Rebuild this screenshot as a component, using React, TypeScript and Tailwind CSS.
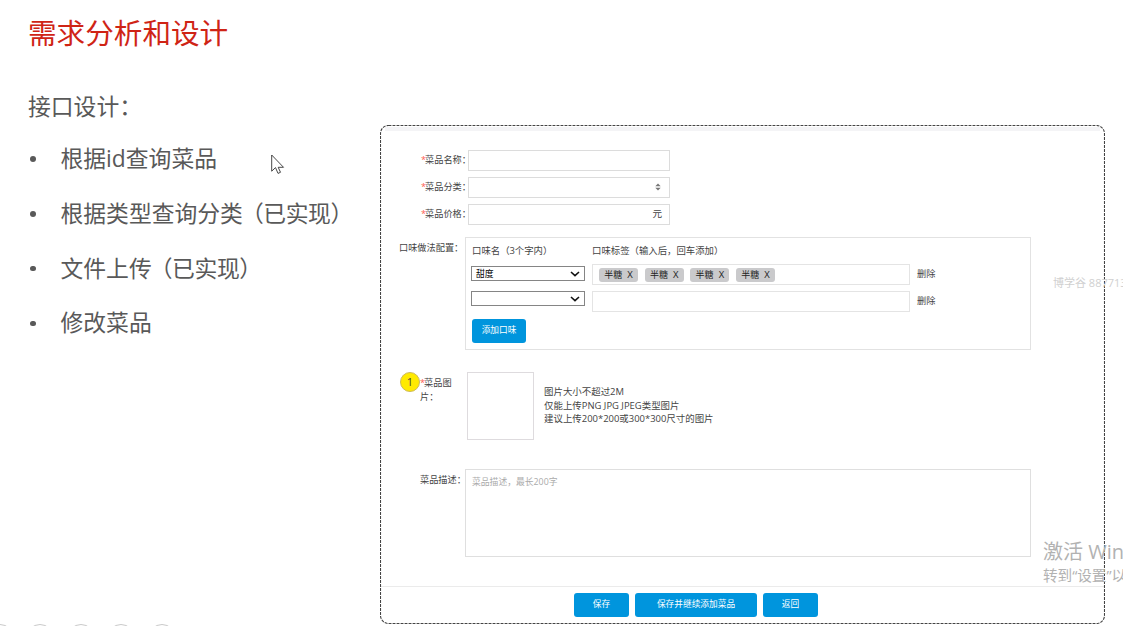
import clsx from 'clsx';

const apis = [
  { name: '根据id查询菜品', done: false },
  { name: '根据类型查询分类', done: true },
  { name: '文件上传', done: true },
  { name: '修改菜品', done: false },
];

const flavors = [
  { id: 1, name: '甜度', tags: ['半糖', '半糖', '半糖', '半糖'] },
  { id: 2, name: '', tags: [] },
];

function Field({ label, children }: { label: string; children?: React.ReactNode }) {
  return (
    <div className="flex h-5 items-center">
      <div className="w-[47px] shrink-0 whitespace-nowrap">
        <span className="-mr-px text-[#ff5a4f]">*</span>
        {label}
      </div>
      <div className="flex h-[21px] w-[202px] shrink-0 items-center justify-end border border-[#dcdcdc] pr-[7px]">
        {children}
      </div>
    </div>
  );
}

function Select({ value }: { value: string }) {
  return (
    <div className="flex h-[15px] w-[114px] items-center justify-between overflow-hidden border border-[#858585] pr-1 pl-1 text-[8.8px] text-black">
      <span className="pt-[3px]">{value}</span>
      <svg width="10" height="6" viewBox="0 0 10 6" fill="none">
        <path d="M1 1L5 4.6L9 1" stroke="#111" strokeWidth="1.6" />
      </svg>
    </div>
  );
}

function Button({ children, className }: { children: string; className: string }) {
  return (
    <button
      className={clsx(
        'flex h-6 items-center justify-center rounded-[3px] bg-[#0095dd] text-[8.7px] whitespace-nowrap text-white',
        className
      )}
    >
      {children}
    </button>
  );
}

function DishForm() {
  return (
    <div className="relative mt-[125px] flex h-[499px] w-[725px] shrink-0 flex-col px-px text-[9.2px] leading-[13.5px] text-[#444]">
      <svg className="absolute inset-0" width="725" height="499" fill="none">
        <rect x="0.5" y="0.5" width="724" height="498" rx="8" stroke="#444" strokeWidth="1.1" strokeDasharray="2.9 1.1" />
      </svg>
      <div className="mx-1 mt-0.5 h-1 shrink-0 bg-[#f4f4f6]" />

      <div className="mt-[19px] ml-10 flex flex-col gap-[7px]">
        <Field label="菜品名称：" />
        <Field label="菜品分类：">
          <svg className="mr-px" width="6" height="8" viewBox="0 0 6 8" fill="#777">
            <path d="M0.3 3.2L3 0.4L5.7 3.2ZM0.3 4.8L3 7.6L5.7 4.8Z" />
          </svg>
        </Field>
        <Field label="菜品价格：">
          <span className="text-[9.6px]">元</span>
        </Field>
      </div>

      <div className="mt-[13px] ml-[18px] flex">
        <div className="mt-[3.5px] w-[66px] shrink-0 whitespace-nowrap">口味做法配置：</div>
        <div className="h-[113px] w-[566px] shrink-0 border border-[#e2e2e2] px-[5px] pt-1.5">
          <div className="flex pl-px text-[9.4px]">
            <div className="w-[120px] whitespace-nowrap">口味名（3个字内）</div>
            <div className="whitespace-nowrap">口味标签（输入后，回车添加）</div>
          </div>
          <div className="mt-[6.5px] flex flex-col gap-1.5">
            {flavors.map((f, row) => (
              <div key={f.id} className="flex h-[21px] items-start">
                <div className={row === 0 ? 'pt-0.5' : ''}>
                  <Select value={f.name} />
                </div>
                <div className="ml-[7px] flex h-[21px] w-[318px] items-center gap-[6.7px] border border-[#e4e4e4] pl-1.5">
                  {f.tags.map((tag, i) => (
                    <span
                      key={i}
                      className="flex h-3.5 w-[39px] items-center justify-center gap-[5px] rounded-[3px] bg-[#cacacc] text-[9px] text-[#222]"
                    >
                      {tag}
                      <span className="text-[9.5px]">X</span>
                    </span>
                  ))}
                </div>
                <span className="mt-[3px] ml-[7px]">删除</span>
              </div>
            ))}
          </div>
          <Button className="mt-[7px] ml-px w-[54px]">添加口味</Button>
        </div>
      </div>

      <div className="mt-[22px] ml-[19px] flex">
        <div className="flex h-5 w-5 shrink-0 items-center justify-center rounded-full border border-[#cdb95c] bg-[#ffea00] text-[11px] text-[#444]">
          1
        </div>
        <div className="mt-[4px] w-[47px] shrink-0 whitespace-nowrap">
          <span className="-mr-px text-[#ff5a4f]">*</span>菜品图
          <br />
          片：
        </div>
        <div className="h-[68px] w-[67px] shrink-0 border border-[#dedbde]" />
        <div className="mt-[13px] ml-2.5 text-[9.45px] whitespace-nowrap">
          <p>图片大小不超过2M</p>
          <p>仅能上传PNG JPG JPEG类型图片</p>
          <p>建议上传200*200或300*300尺寸的图片</p>
        </div>
      </div>

      <div className="mt-[29px] ml-[39px] flex">
        <div className="mt-1 w-[45px] shrink-0 whitespace-nowrap">菜品描述：</div>
        <div className="h-[88px] w-[566px] shrink-0 border border-[#dfdfdf] px-1.5 pt-1.5 text-[8.8px] text-[#aaa]">
          菜品描述，最长200字
        </div>
      </div>

      <div className="mt-[29px] flex gap-1.5 border-t border-[#ebebeb] pt-1.5 pl-[193px]">
        <Button className="w-[55px]">保存</Button>
        <Button className="w-[122px]">保存并继续添加菜品</Button>
        <Button className="w-[55px]">返回</Button>
      </div>
    </div>
  );
}

export default function App() {
  return (
    <div className="relative flex h-[626px] w-[1123px] overflow-hidden bg-white font-['Open_Sans','Noto_Sans_CJK_SC',sans-serif]">
      <div className="w-[380px] shrink-0 pl-7 whitespace-nowrap text-[#595959]">
        <h1 className="mt-[13px] text-[28.6px] leading-10 text-[#cf2415]">需求分析和设计</h1>
        <h2 className="mt-[38px] text-[22.8px] leading-8">接口设计：</h2>
        <ul className="mt-5 flex flex-col gap-[22.8px] text-[22.8px] leading-8">
          {apis.map((item) => (
            <li key={item.name} className="flex items-center">
              <span className="mr-[25px] ml-0.5 h-[5.5px] w-[5.5px] rounded-full bg-[#595959]" />
              {item.name}
              {item.done && <span className="-ml-0.5 tracking-[-0.4px]">（已实现）</span>}
            </li>
          ))}
        </ul>
      </div>

      <DishForm />

      {/* screen watermarks */}
      <div className="absolute top-[275px] left-[1053px] text-[11px] leading-4 whitespace-nowrap text-[#d0d0d0]">
        博学谷 887713
      </div>
      <div className="absolute top-[538px] left-[1043px] whitespace-nowrap text-[#b2b2b2]">
        <p className="text-[20px] leading-7">激活 Win</p>
        <p className="-mt-px text-[14.6px] leading-5">转到“设置”以</p>
      </div>

      {/* player controls peeking in from the bottom edge */}
      <svg className="absolute bottom-0 left-0" width="190" height="2" fill="none" stroke="#c9c9c9">
        {[0, 40, 81, 121, 162].map((cx) => (
          <circle key={cx} cx={cx} cy="14" r="13.5" />
        ))}
      </svg>

      <svg className="absolute top-[154px] left-[271px]" width="14" height="21" viewBox="0 0 14 21">
        <path
          d="M0.7 1V17.2L4.5 13.6L7 19.4L9.5 18.3L7.2 13.3H12.5Z"
          fill="#fff"
          stroke="#333"
          strokeWidth="0.9"
        />
      </svg>
    </div>
  );
}
